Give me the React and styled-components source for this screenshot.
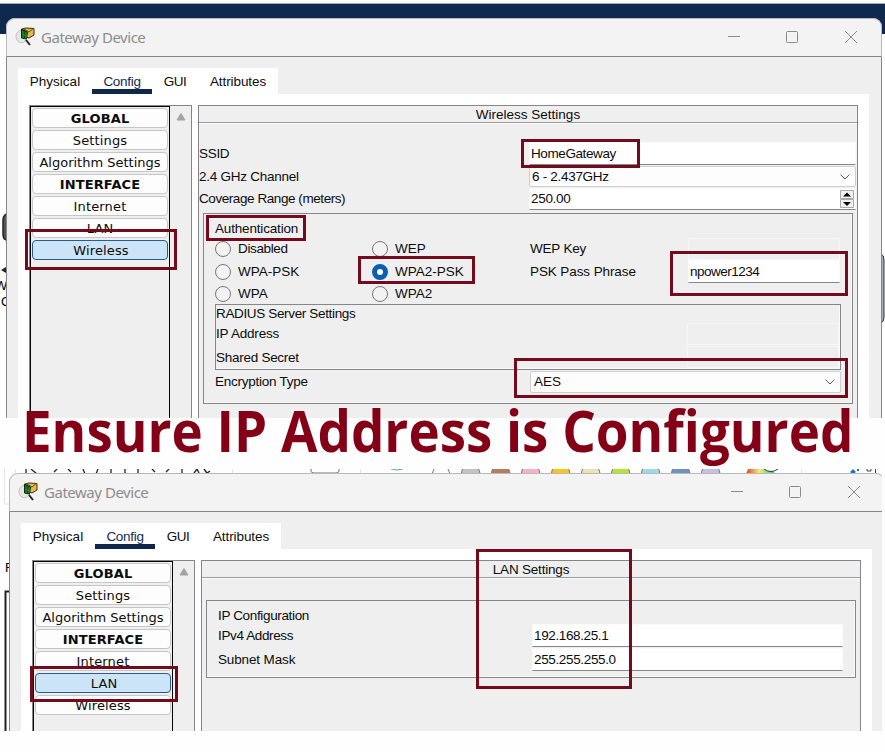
import React from "react";
import styled, { createGlobalStyle } from "styled-components";

const Global = createGlobalStyle`
  * { box-sizing: border-box; }
  body { margin: 0; background: #fff; overflow: hidden; }
`;

const ui = '"Liberation Sans", Arial, sans-serif';

const Page = styled.main`
  width: 885px;
  height: 752px;
  background: #fefefe;
  font: 13.5px/16px ${ui};
  color: #0c0c0c;
`;

const Scene = styled.section`
  position: relative;
  width: ${(p) => p.$w}px;
  height: ${(p) => p.$h}px;
  overflow: hidden;
  background: #fefefe;
`;

const Backdrop = styled.svg`
  position: absolute;
  inset: 0;
`;

const Window = styled.div`
  position: absolute;
  left: ${(p) => p.$x}px;
  top: ${(p) => p.$y}px;
  width: 876px;
  height: 500px;
  border-radius: 9px 9px 0 0;
  background: #efefef;
  display: flex;
  flex-direction: column;
`;

const TitleBar = styled.header`
  height: 39px;
  flex: none;
  display: flex;
  align-items: center;
  background: #f3f3f3;
  border: 1px solid #b9b9bd;
  border-bottom-color: #85868a;
  border-radius: 9px 9px 0 0;
  padding: 0 0 2px 8px;
`;

const Title = styled.span`
  flex: 1;
  margin-left: 5px;
  font: 15px/20px "Noto Sans", "Open Sans", sans-serif;
  letter-spacing: -0.47px;
  color: #8d8d8d;
`;

const Controls = styled.svg`
  flex: none;
  margin-right: 22px;
`;

const Body = styled.div`
  flex: 1;
  padding: 11px 11px 0;
  border: solid #85868a;
  border-width: 0 1px;
`;

const Tabs = styled.nav`
  display: flex;
  width: 260px;
  height: 26px;
  background: #fff;
`;

const Tab = styled.div`
  width: ${(p) => p.$w}px;
  height: 26px;
  text-align: center;
  line-height: 27px;
  letter-spacing: ${(p) => p.$ls}px;
  color: ${(p) => (p.$on ? "#142c50" : "#0c0c0c")};
  border-bottom: 5px solid ${(p) => (p.$on ? "#0f2749" : "transparent")};
`;

const Sheet = styled.div`
  display: flex;
  gap: 6px;
  width: 851px;
  height: 400px;
  background: #fff;
  padding: 11px 0 0 11px;
`;

const SideBar = styled.aside`
  display: flex;
  width: 163px;
  flex: none;
  border: 1px solid #85868a;
  border-bottom: 0;
  background: #efefef;
`;

const SideList = styled.div`
  width: 140px;
  border: 1px solid #050505;
  padding: 1px 1px 0;
  display: flex;
  flex-direction: column;
  gap: 2px;
`;

const SideButton = styled.button`
  height: 20px;
  flex: none;
  padding: 1px 0 0;
  border: 1px solid ${(p) => (p.$on ? "#2a5b8c" : "#c6c6c6")};
  border-radius: 4px;
  background: ${(p) => (p.$on ? "#cce4f7" : "#fdfdfd")};
  font: ${(p) => (p.$head ? 700 : 400)} 13px/17px "DejaVu Sans", sans-serif;
  letter-spacing: ${(p) => (p.$long ? 0 : 0.15)}px;
  color: #0c0c0c;
  text-indent: ${(p) => (p.$on ? 2 : 0)}px;
  white-space: nowrap;
`;

const ScrollArrow = styled.svg`
  margin: 6px 0 0 6px;
`;

const Panel = styled.section`
  width: 660px;
  flex: none;
  border: 1px solid #85868a;
  border-bottom: 0;
  background: #efefef;
`;

const PanelTitle = styled.h2`
  height: 17px;
  margin: 0;
  border-bottom: 1px solid #9b9c9f;
  box-shadow: 0 1px #fafafa;
  text-align: center;
  font: inherit;
  line-height: 17px;
`;

const Text = styled.span`
  letter-spacing: ${(p) => p.$ls ?? -0.3}px;
  white-space: nowrap;
`;

const FormRow = styled.div`
  display: grid;
  grid-template-columns: 330px 327px;
  height: ${(p) => p.$h}px;
  line-height: ${(p) => p.$h}px;
`;

const Form = styled.div`
  padding-top: 19px;
  height: 90px;
`;

const Input = styled.div`
  height: ${(p) => p.$h || 23}px;
  padding-left: 1px;
  line-height: ${(p) => p.$h || 23}px;
  background: ${(p) => (p.$off ? "#efefef" : "#fff")};
  border: 1px solid ${(p) => (p.$off ? "#f7f7f7" : "#fafafa")};
  border-bottom-color: ${(p) => (p.$off ? "#f7f7f7" : "#85868a")};
  display: flex;
  align-items: center;
  justify-content: space-between;
`;

const Select = styled(Input)`
  padding-left: ${(p) => p.$pad || 2}px;
  padding-right: 5px;
  background: #fdfdfd;
  border: 1px solid #cfcfcf;
  border-radius: 2px;
`;

const Spinner = styled.svg`
  flex: none;
`;

const Group = styled.div`
  width: 650px;
  height: ${(p) => p.$h}px;
  margin-left: 4px;
  padding-left: 11px;
  border: 1px solid #85868a;
  box-shadow: inset 0 -1px #fafafa, inset -1px 0 #fafafa;
`;

const GroupTitle = styled.div`
  height: 23px;
  line-height: 29px;
`;

const AuthGrid = styled.div`
  display: grid;
  grid-template-columns: 157px 158px 158px 152px;
  grid-template-rows: 23px 23px 21px;
  align-items: center;
`;

const RadioLabel = styled.label`
  display: flex;
  align-items: center;
  gap: 7px;
`;

const RadioDot = styled.span`
  width: 16px;
  height: 16px;
  border-radius: 50%;
  border: ${(p) => (p.$on ? "5px solid #0a5fb4" : "1px solid #77787a")};
  background: ${(p) => (p.$on ? "#fff" : "#f3f3f3")};
`;

const Radius = styled.div`
  width: 626px;
  height: 66px;
  border: 1px solid #85868a;
  box-shadow: inset 0 -1px #fafafa, inset -1px 0 #fafafa;
  display: grid;
  grid-template-columns: 471px 152px;
  grid-template-rows: 17px 23px 24px;
  align-items: center;
  line-height: 17px;
`;

const Wide = styled(Text)`
  grid-column: 1 / -1;
`;

const Encryption = styled.div`
  display: grid;
  grid-template-columns: 315px 311px;
  align-items: center;
  line-height: 22px;
  padding-top: 1px;
`;

const IpRow = styled.div`
  display: grid;
  grid-template-columns: 314px 311px;
  height: 24px;
  line-height: 23px;
`;

const Spacer = styled.div`
  height: 22px;
`;

const Mark = styled.div`
  position: absolute;
  left: ${(p) => p.$x}px;
  top: ${(p) => p.$y}px;
  width: ${(p) => p.$w}px;
  height: ${(p) => p.$h}px;
  border: 3px solid #740b1d;
`;

const Banner = styled.div`
  position: relative;
  z-index: 1;
  display: flex;
  height: 51px;
  padding-left: 22px;
`;

const BannerText = styled.h1`
  margin: -13px 0 0;
  height: 51px;
  flex: none;
  font: 700 57px/51px "Open Sans", sans-serif;
  white-space: nowrap;
  color: #830016;
  transform: scaleX(0.928);
  transform-origin: 0 0;
`;

function AppIcon() {
  return (
    <svg width="21" height="22" viewBox="0 0 21 22">
      <ellipse cx="6.5" cy="10.5" rx="5.5" ry="6.3" fill="#e4e7e3" stroke="#bfc2be" />
      <path d="m7 3 4-1 8 .500V9l-5 3-7-3z" fill="#e4b94e" stroke="#39300d" />
      <path d="m8 2.500 6 3.500 5-4" fill="none" stroke="#67501b" />
      <path d="m6.500 3 6 3-1 7-5-1z" fill="#174f1d" stroke="#12270f" />
      <path d="M8 5v7m3-6v6M7 8l5 2" stroke="#24962f" />
      <path d="m11 14 4 5" stroke="#222" strokeWidth="2" />
    </svg>
  );
}

function Chevron() {
  return (
    <svg width="10" height="6" viewBox="0 0 10 6">
      <path d="M.6.7 5 5 9.400.7" fill="none" stroke="#555" />
    </svg>
  );
}

function Radio({ on, ls = 0, children }) {
  return (
    <RadioLabel>
      <RadioDot $on={on} />
      <Text $ls={ls}>{children}</Text>
    </RadioLabel>
  );
}

const sideItems = ["GLOBAL", "Settings", "Algorithm Settings", "INTERFACE", "Internet", "LAN", "Wireless"];
const tabs = [["Physical", 74, 0], ["Config", 60, -0.3], ["GUI", 46, -0.5], ["Attributes", 80, -0.08]];

function DeviceWindow({ x, y, active, title, ls, children }) {
  return (
    <Window $x={x} $y={y}>
      <TitleBar>
        <AppIcon />
        <Title>Gateway Device</Title>
        <Controls width="134" height="14" viewBox="0 0 134 14" fill="none" stroke="#8b8b8b">
          <path d="M3 6.500h12" />
          <rect x="61.500" y="1.500" width="11" height="11" rx="1" />
          <path d="m120 1 12 12m0-12-12 12" />
        </Controls>
      </TitleBar>
      <Body>
        <Tabs>
          {tabs.map(([name, w, spacing]) => (
            <Tab key={name} $w={w} $ls={spacing} $on={name === "Config"}>{name}</Tab>
          ))}
        </Tabs>
        <Sheet>
          <SideBar>
            <SideList>
              {sideItems.map((s) => (
                <SideButton key={s} $long={s.length > 12} $head={s === "GLOBAL" || s === "INTERFACE"} $on={s === active}>{s}</SideButton>
              ))}
            </SideList>
            <ScrollArrow width="10" height="9" viewBox="0 0 10 9">
              <path d="M1 8 5 1.500 9 8z" fill="#a4a4a4" stroke="#a4a4a4" strokeLinejoin="round" />
            </ScrollArrow>
          </SideBar>
          <Panel>
            <PanelTitle><Text $ls={ls}>{title}</Text></PanelTitle>
            {children}
          </Panel>
        </Sheet>
      </Body>
    </Window>
  );
}

function WirelessForm() {
  return (
    <>
      <Form>
        <FormRow $h={24}><Text>SSID</Text><Input><Text $ls={-0.4}>HomeGateway</Text></Input></FormRow>
        <FormRow $h={22}><Text $ls={-0.25}>2.4 GHz Channel</Text><Select $h={21}><Text>6 - 2.437GHz</Text><Chevron /></Select></FormRow>
        <FormRow $h={22}>
          <Text $ls={-0.43}>Coverage Range (meters)</Text>
          <Input $h={22}>
            <Text>250.00</Text>
            <Spinner width="15" height="19" viewBox="0 0 15 19">
              <path d="M.5.5h13v8H.5zM.5 9.500h13v8H.5z" fill="#f1f1f1" stroke="#a9a9a9" />
              <path d="M3 6.500h8L7 2.500zM3 12h8l-4 4z" fill="#000" />
            </Spinner>
          </Input>
        </FormRow>
      </Form>
      <Group $h={191}>
        <GroupTitle><Text $ls={-0.17}>Authentication</Text></GroupTitle>
        <AuthGrid>
          <Radio ls={-0.37}>Disabled</Radio><Radio>WEP</Radio><Text $ls={-0.2}>WEP Key</Text><Input $off $h={22} />
          <Radio>WPA-PSK</Radio><Radio on>WPA2-PSK</Radio><Text $ls={-0.1}>PSK Pass Phrase</Text><Input><Text $ls={-0.5}>npower1234</Text></Input>
          <Radio>WPA</Radio><Radio>WPA2</Radio>
        </AuthGrid>
        <Radius>
          <Wide $ls={-0.35}>RADIUS Server Settings</Wide>
          <Text $ls={-0.2}>IP Address</Text><Input $off $h={22} />
          <Text $ls={-0.27}>Shared Secret</Text><Input $off $h={22} />
        </Radius>
        <Encryption><Text $ls={-0.25}>Encryption Type</Text><Select $h={22} $pad={3}><Text $ls={0}>AES</Text><Chevron /></Select></Encryption>
      </Group>
    </>
  );
}

function LanForm() {
  return (
    <>
      <Spacer />
      <Group $h={78}>
        <GroupTitle><Text $ls={-0.35}>IP Configuration</Text></GroupTitle>
        <IpRow><Text $ls={-0.37}>IPv4 Address</Text><Input><Text $ls={-0.37}>192.168.25.1</Text></Input></IpRow>
        <IpRow><Text $ls={-0.14}>Subnet Mask</Text><Input><Text $ls={-0.35}>255.255.255.0</Text></Input></IpRow>
      </Group>
    </>
  );
}

const swatches = ["#c2c2c2", "#b67c5b", "#f7b1ca", "#fac51f", "#ede2b4", "#b5e52e", "#9bdae8", "#7092be", "#c8bfe7"];

export default function App() {
  return (
    <Page>
      <Global />
      <Scene $w={885} $h={418}>
        <Backdrop width="885" height="418">
          <path d="M0 3.500h885" stroke="#aaa" />
          <path d="M0 4h885v30H0z" fill="#0f284e" />
          <path d="M6 214q-3 2-3 6v14q0 5 3 6" fill="#555" stroke="#222" strokeWidth="1.500" />
          <path d="m1 270 5-3v6z" fill="#222" />
          <path d="M881 254q3 1 3 6v57q0 5-3 6" fill="#a8adb5" stroke="#333" />
          <text x="-5" y="290" fontSize="13">W</text>
          <text x="1" y="306" fontSize="13">C</text>
        </Backdrop>
        <DeviceWindow x={6} y={18} active="Wireless" title="Wireless Settings" ls={0}><WirelessForm /></DeviceWindow>
        <Mark $x={521} $y={139} $w={119} $h={29} />
        <Mark $x={206} $y={215} $w={100} $h={26} />
        <Mark $x={358} $y={256} $w={117} $h={28} />
        <Mark $x={670} $y={251} $w={178} $h={45} />
        <Mark $x={514} $y={358} $w={334} $h={40} />
        <Mark $x={25} $y={229} $w={152} $h={41} />
      </Scene>
      <Banner><BannerText>Ensure IP Address is Configured</BannerText></Banner>
      <Scene $w={882} $h={262}>
        <Backdrop width="882" height="262">
          <path d="M4.500 0v35H9M15.500 0v5M232.500 0v5M360.500 0v5M801.500 0v5" fill="none" stroke="#e4e4e4" />
          <path d="M26 0v5m5-5 6 5M57 0l-3 3m14-3 3 3M83 0l2 5m13-5-2 5m15-5v5m14-5v5m13-5v5m14-5 3 3m14-3-3 3m16-3v5m12-1 3-4 2 4m5-4 3 4 3-2" stroke="#222" fill="none" strokeWidth="1.300" />
          <path d="M311 0v2q0 2 3 2h22q3 0 3-2V0M432 5l2-5m14 0 2 5" fill="none" stroke="#777" />
          <path d="M391 0q6 2 12 0" stroke="#5aa0d0" fill="none" />
          {swatches.map((c, i) => (
            <path key={c} d={`M${461.5 + i * 30} 5q0-3 1.500-6h15q2 3 2 6z`} fill={c} stroke="#777" />
          ))}
          <defs>
            <linearGradient id="spectrum">
              <stop stopColor="#ef3e18" /><stop offset=".45" stopColor="#f6e87a" /><stop offset="1" stopColor="#17d78b" />
            </linearGradient>
          </defs>
          <path d="m746 5 2-5h24l3 5z" fill="url(#spectrum)" />
          <path d="M764 0q7 5 14 0" fill="#fff" stroke="#333" />
          <path d="m850 3 3-3 3 3-3 2zM857 0h2v2h-2z" fill="#1577c0" />
          <path d="M867 0v2h4V0M875.500 0v5" fill="none" stroke="#444" />
          <path d="M9 122.500H5.500V262" fill="none" stroke="#222" strokeWidth="2" />
          <text x="5" y="103" fontSize="13">F</text>
        </Backdrop>
        <DeviceWindow x={9} y={4} active="LAN" title="LAN Settings" ls={-0.2}><LanForm /></DeviceWindow>
        <Mark $x={30} $y={197} $w={148} $h={36} />
        <Mark $x={476} $y={80} $w={156} $h={140} />
      </Scene>
    </Page>
  );
}
